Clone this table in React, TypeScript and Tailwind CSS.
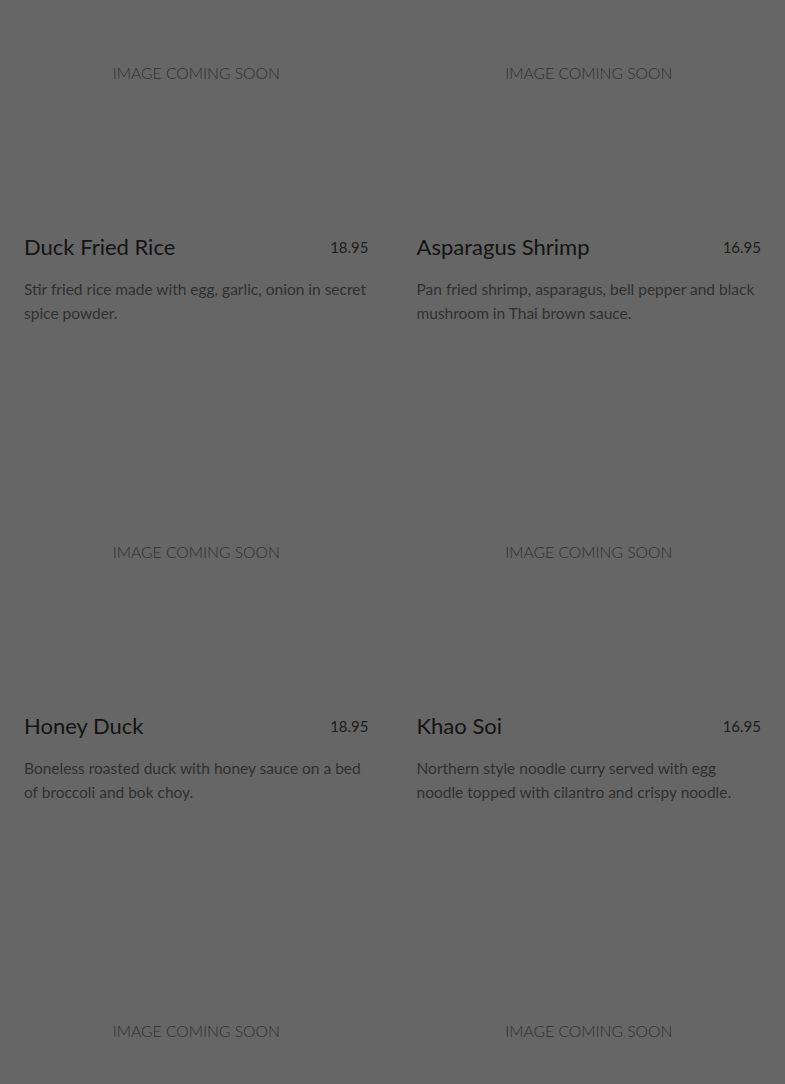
import React from "react";

type Item = { name: string; price: string; desc: string };

const items: Item[] = [
  { name: "Duck Fried Rice", price: "18.95", desc: "Stir fried rice made with egg, garlic, onion in secret spice powder." },
  { name: "Asparagus Shrimp", price: "16.95", desc: "Pan fried shrimp, asparagus, bell pepper and black mushroom in Thai brown sauce." },
  { name: "Honey Duck", price: "18.95", desc: "Boneless roasted duck with honey sauce on a bed of broccoli and bok choy." },
  { name: "Khao Soi", price: "16.95", desc: "Northern style noodle curry served with egg noodle topped with cilantro and crispy noodle." },
  { name: "", price: "", desc: "" },
  { name: "", price: "", desc: "" },
];

function Card({ item }: { item: Item }) {
  return (
    <div className="flex flex-col">
      <div className="flex h-[146px] items-center justify-center pt-[2px]">
        <span className="text-[15.7px] font-light text-[#2e2e2e] [font-family:Lato,sans-serif]">
          IMAGE COMING SOON
        </span>
      </div>
      {item.name && (
        <div className="mt-[86px]">
          <div className="flex items-start justify-between">
            <h3 className="text-[22px] leading-[30px] text-[#141414]">{item.name}</h3>
            <span className="mt-[3px] text-[15px] leading-6 text-[#1c1c1c]">{item.price}</span>
          </div>
          <p className="mt-[15px] text-[15.5px] leading-6 text-[#303030]">{item.desc}</p>
        </div>
      )}
    </div>
  );
}

export default function App() {
  return (
    <div className="min-h-[1084px] overflow-hidden bg-[#666666] px-6 [font-family:Lato,'Noto_Sans',sans-serif]">
      <div className="grid grid-cols-2 gap-x-12 gap-y-[154px]">
        {items.map((it, i) => (
          <Card key={i} item={it} />
        ))}
      </div>
    </div>
  );
}
